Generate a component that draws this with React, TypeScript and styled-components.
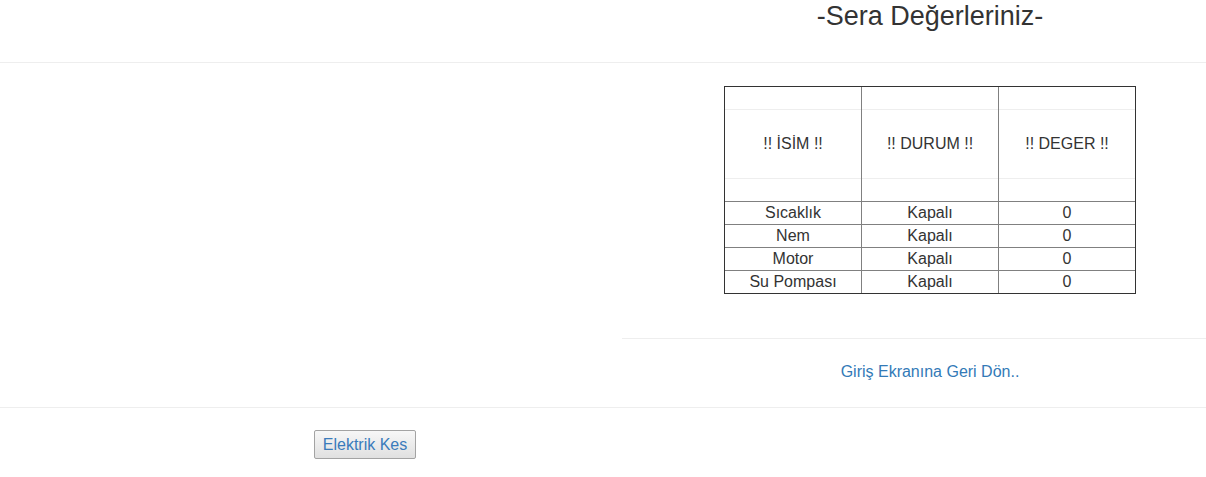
import React from "react";
import styled, { createGlobalStyle } from "styled-components";

const Global = createGlobalStyle`
  html, body { margin: 0; padding: 0; background: #fff; overflow: hidden; }
  body { font-family: "Liberation Sans", Arial, Helvetica, sans-serif; font-size: 14px; color: #333; }
`;

const Page = styled.div`
  width: 1206px;
  display: flex;
  flex-direction: column;
`;

const Header = styled.header`
  height: 62px;
  display: grid;
  grid-template-columns: 622px 616px;
  border-bottom: 1px solid #eee;
`;

const Title = styled.h1`
  grid-column: 2;
  margin: 0;
  padding-top: 1px;
  text-align: center;
  font-size: 27px;
  font-weight: 400;
  line-height: 30px;
  color: #333;
`;

const Main = styled.main`
  display: grid;
  grid-template-columns: 622px 616px;
  border-bottom: 1px solid #eee;
`;

const RightCol = styled.section`
  grid-column: 2;
  display: flex;
  flex-direction: column;
  align-items: center;
`;

const Table = styled.table`
  box-sizing: border-box;
  margin-top: 23px;
  width: 412px;
  border: 1px solid #333;
  border-spacing: 0;
  table-layout: fixed;
  font-size: 16px;
  color: #333;
`;

const Col = styled.col<{ $w: number }>`
  width: ${(p) => p.$w}px;
`;

const Th = styled.th`
  box-sizing: border-box;
  padding: 0;
  font-weight: 400;
  vertical-align: top;
  & + & { border-left: 1px solid #808080; }
`;

const HeadBand = styled.div<{ $tall?: boolean }>`
  height: ${(p) => (p.$tall ? "68px" : "22px")};
  display: flex;
  align-items: center;
  justify-content: center;
  & + & { border-top: 1px solid #eee; }
`;

const Td = styled.td`
  box-sizing: border-box;
  padding: 0;
  height: 23px;
  text-align: center;
  line-height: 22px;
  border-top: 1px solid #808080;
  & + & { border-left: 1px solid #808080; }
`;

const Rule = styled.hr`
  align-self: stretch;
  margin: 44px 0 0;
  border: 0;
  border-top: 1px solid #eee;
  height: 0;
`;

const BackLink = styled.a`
  margin: 24px 0 26px;
  color: #337ab7;
  text-decoration: none;
  font-size: 16px;
  line-height: 18px;
`;

const Footer = styled.footer`
  padding: 22px 0 0 314px;
  height: 48px;
`;

const Button = styled.button`
  height: 29px;
  width: 102px;
  padding: 0;
  font-family: "Liberation Sans", Arial, sans-serif;
  font-size: 16px;
  color: #3a7bbb;
  background: linear-gradient(#f7f7f7, #e0e0e0);
  border: 1px solid #a3a3a3;
  border-radius: 2px;
`;

const cols = ["!! İSİM !!", "!! DURUM !!", "!! DEGER !!"];
const widths = [136, 137, 137];
const rows = [
  ["Sıcaklık", "Kapalı", "0"],
  ["Nem", "Kapalı", "0"],
  ["Motor", "Kapalı", "0"],
  ["Su Pompası", "Kapalı", "0"],
];

export default function App() {
  return (
    <Page>
      <Global />
      <Header>
        <Title>-Sera Değerleriniz-</Title>
      </Header>
      <Main>
        <RightCol>
          <Table>
            <colgroup>
              {widths.map((w, i) => (
                <Col key={i} $w={w} />
              ))}
            </colgroup>
            <thead>
              <tr>
                {cols.map((c) => (
                  <Th key={c}>
                    <HeadBand />
                    <HeadBand $tall>{c}</HeadBand>
                    <HeadBand />
                  </Th>
                ))}
              </tr>
            </thead>
            <tbody>
              {rows.map((r) => (
                <tr key={r[0]}>
                  {r.map((v, i) => (
                    <Td key={i}>{v}</Td>
                  ))}
                </tr>
              ))}
            </tbody>
          </Table>
          <Rule />
          <BackLink href="#">Giriş Ekranına Geri Dön..</BackLink>
        </RightCol>
      </Main>
      <Footer>
        <Button>Elektrik Kes</Button>
      </Footer>
    </Page>
  );
}
